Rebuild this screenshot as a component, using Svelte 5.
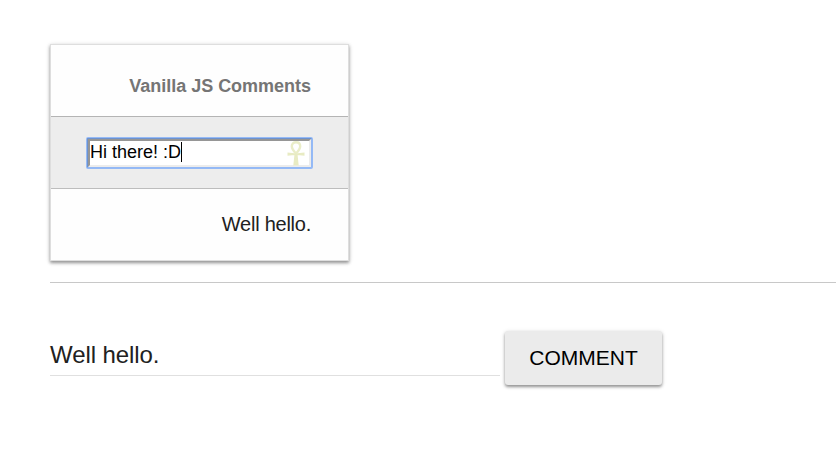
<script>
  let comment = $state('Well hello.');
  let draft = $state('Hi there! :D');
</script>

<main>
  <section class="card">
    <header>Vanilla JS Comments</header>
    <div class="row editing">
      <div class="edit">
        <span>{draft}</span><i class="caret"></i>
        <svg width="18" height="26" viewBox="0 0 18 26" fill="none" stroke="#eaedc8">
          <path d="M9 12.500C6 9.500 4.800 7.500 4.800 5.300C4.800 3 6.500 1.300 9 1.300S13.200 3 13.200 5.300C13.200 7.500 12 9.500 9 12.500Z" stroke-width="2.400" />
          <path d="M.5 11.500L7.500 12.300H10.500L17.500 11.500V14.800L10.500 14H7.500L.5 14.800ZM7.500 13H10.500L11.700 24.500H6.300Z" fill="#e8ebc3" stroke="none" />
        </svg>
      </div>
    </div>
    <div class="row comment">{comment}</div>
  </section>
  <div class="divider"></div>
  <div class="form">
    <div class="field">{comment}</div>
    <button>COMMENT</button>
  </div>
</main>

<style>
  :global(body) { background: #fff; overflow: hidden; }
  main {
    box-sizing: border-box;
    height: 454px;
    padding: 44px 0 0 50px;
    font-family: "Liberation Sans", Arial, sans-serif;
    color: #212121;
  }
  .card {
    box-sizing: border-box;
    width: 299px;
    height: 217px;
    border: 1px solid #dedede;
    background: #fefefe;
    box-shadow: 0 2px 3px rgba(0,0,0,.36), 0 1px 5px rgba(0,0,0,.14);
  }
  header, .row {
    box-sizing: border-box;
    height: 72px;
    padding-right: 37px;
    text-align: right;
    white-space: nowrap;
  }
  header {
    border-bottom: 1px solid #b4b4b4;
    color: #757575;
    font-size: 18px;
    font-weight: bold;
    line-height: 82px;
    letter-spacing: -.02px;
  }
  .row { font-size: 20px; line-height: 70px; }
  .comment { letter-spacing: -.25px; }
  .editing {
    display: flex;
    border-bottom: 1px solid #bdbdbd;
    background: #ededed;
    padding: 21px 0 0 36px;
  }
  .edit {
    box-sizing: border-box;
    display: flex;
    width: 225px;
    height: 30px;
    border: 3px solid;
    border-color: #969696 #ececec #ececec #969696;
    background: #fff;
    color: #000;
    font-size: 18px;
    line-height: 22px;
    outline: 2px solid rgba(77,144,254,.55);
    outline-offset: -1px;
    border-radius: 1px;
  }
  .caret { width: 1px; height: 20px; margin-top: 1px; background: #000; }
  svg { margin: 0 4px 0 auto; }
  .divider { height: 1px; margin-top: 21px; background: #c8c8c8; }
  .form { display: flex; gap: 5px; margin-top: 48px; }
  .field {
    width: 450px;
    height: 44px;
    border-bottom: 1px solid #e0e0e0;
    font-size: 24px;
    line-height: 47px;
    letter-spacing: -.08px;
  }
  button {
    width: 157px;
    height: 54px;
    padding: 0;
    border: 0;
    border-radius: 3px;
    background: #ebebeb;
    color: #000;
    font: 21px/54px "Liberation Sans", Arial, sans-serif;
    box-shadow: 0 2px 3px rgba(0,0,0,.36), 0 1px 5px rgba(0,0,0,.14);
  }
</style>
